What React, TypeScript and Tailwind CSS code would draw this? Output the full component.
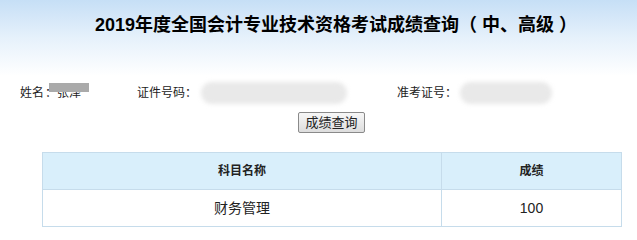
import React from "react";

const font = { fontFamily: '"Liberation Sans", "Noto Sans CJK SC", sans-serif' };

function Blur({ w, className = "" }: { w: string; className?: string }) {
  return <span className={`inline-block h-[22px] rounded-full bg-[#e9e9e9] blur-[2px] ${w} ${className}`} />;
}

export default function App() {
  return (
    <div className="w-[637px] h-[239px] bg-white text-[#222] overflow-hidden" style={font}>
      <div className="h-[76px] bg-gradient-to-b from-[#c6dff6] via-[#e6f1fb] to-white pt-[14px] pl-[95px]">
        <h1 className="text-[18px] font-bold leading-[22px] text-black whitespace-nowrap">
          2019年度全国会计专业技术资格考试成绩查询（ 中、高级 ）
        </h1>
      </div>

      <div className="flex items-center h-[34px] pl-[20px] text-[12px]">
        <div className="w-[117px] flex items-center">
          <span>姓名</span>
          <span className="relative ml-[1px]">
            ：张泽
            <span className="absolute left-[4px] -top-[1px] w-[40px] h-[9px] bg-[#aaaaaa]" />
          </span>
        </div>
        <span className="w-[64px]">证件号码：</span>
        <Blur w="w-[146px]" />
        <span className="ml-[50px] w-[63px]">准考证号：</span>
        <Blur w="w-[92px]" />
      </div>

      <div className="pl-[298px]">
        <button className="h-[21px] w-[67px] border border-[#8a8a8a] rounded-[2px] bg-gradient-to-b from-[#f7f7f7] to-[#dddddd] text-[13px] leading-[19px] text-[#222]">
          成绩查询
        </button>
      </div>

      <div className="pl-[42px] mt-[18px]">
        <div className="w-[580px] border border-[#c6dceb]">
          <div className="flex h-[37px] bg-[#d9effb] border-b border-[#c6dceb] text-[12px] font-bold">
            <div className="w-[399px] flex items-center justify-center border-r border-[#c6dceb]">科目名称</div>
            <div className="flex-1 flex items-center justify-center">成绩</div>
          </div>
          <div className="flex h-[36px] text-[14px]">
            <div className="w-[399px] flex items-center justify-center border-r border-[#c6dceb]">财务管理</div>
            <div className="flex-1 flex items-center justify-center">100</div>
          </div>
        </div>
      </div>
    </div>
  );
}
